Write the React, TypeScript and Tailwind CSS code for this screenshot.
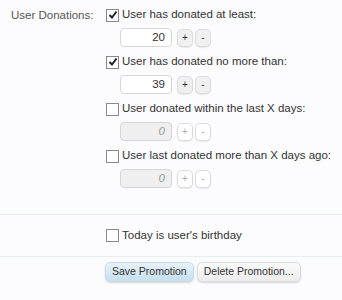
import React from 'react';

const Check: React.FC<{ checked?: boolean }> = ({ checked }) => (
    <span className="inline-flex w-[13px] h-[13px] border border-[#8a8a8a] bg-white items-center justify-center shrink-0">
        {checked && (
            <svg width="10" height="10" viewBox="0 0 10 10">
                <path d="M1.5 5 L4 7.5 L8.5 1.5" fill="none" stroke="#222" strokeWidth="2" />
            </svg>
        )}
    </span>
);

const Spinner: React.FC<{ value: string; disabled?: boolean }> = ({ value, disabled }) => (
    <div className="flex items-center gap-[2px] pl-[14px]">
        <div className={`w-[52px] h-[19px] rounded-[4px] border border-[#d6d6d6] text-right pr-[6px] leading-[17px] ${disabled ? 'bg-[#efefef] text-[#999] italic' : 'bg-white text-[#333]'}`}>
            {value}
        </div>
        <div className={`w-[16px] h-[18px] rounded-[5px] border border-[#dcdcdc] flex items-center justify-center text-[10px] shadow-[0_1px_1px_rgba(0,0,0,0.08)] ml-[3px] ${disabled ? 'bg-white text-[#aaa]' : 'bg-[#f0f0f0] text-[#333]'}`}>+</div>
        <div className={`w-[16px] h-[18px] rounded-[5px] border border-[#dcdcdc] flex items-center justify-center text-[10px] shadow-[0_1px_1px_rgba(0,0,0,0.08)] ${disabled ? 'bg-white text-[#aaa]' : 'bg-[#f0f0f0] text-[#333]'}`}>-</div>
    </div>
);

const Option: React.FC<{ label: string; checked?: boolean; value: string }> = ({ label, checked, value }) => (
    <div className="flex flex-col gap-[6px]">
        <label className="flex items-center gap-[3px] h-[14px] whitespace-nowrap">
            <Check checked={checked} />
            <span>{label}</span>
        </label>
        <Spinner value={value} disabled={!checked} />
    </div>
);

export default function App() {
    return (
        <div className="w-[342px] h-[300px] bg-[#fcfcfe] text-[#333] text-[11.5px] overflow-hidden" style={{ fontFamily: '"Liberation Sans", Arial, sans-serif' }}>
            <div className="flex pt-[8px]">
                <div className="w-[106px] pl-[11px] text-[#555] leading-[14px] whitespace-nowrap">User Donations:</div>
                <div className="flex flex-col gap-[8px]">
                    <Option label="User has donated at least:" checked value="20" />
                    <Option label="User has donated no more than:" checked value="39" />
                    <Option label="User donated within the last X days:" value="0" />
                    <Option label="User last donated more than X days ago:" value="0" />
                </div>
            </div>
            <div className="mt-[26px] border-t border-[#e4eef2]" />
            <div className="flex items-center pl-[106px] h-[41px]">
                <label className="flex items-center gap-[3px] whitespace-nowrap">
                    <Check />
                    <span>Today is user's birthday</span>
                </label>
            </div>
            <div className="border-t border-[#e4eef2]" />
            <div className="flex gap-[3px] pl-[105px] pt-[5px] text-[10.5px]">
                <button className="h-[20px] px-[6px] rounded-[5px] border border-[#c9dbe6] bg-gradient-to-b from-[#e8f2f8] to-[#c6dfee] text-[#333] shadow-[0_1px_2px_rgba(0,0,0,0.15)] whitespace-nowrap">Save Promotion</button>
                <button className="h-[20px] px-[6px] rounded-[5px] border border-[#dcdcdc] bg-gradient-to-b from-[#fafafa] to-[#ececec] text-[#333] shadow-[0_1px_2px_rgba(0,0,0,0.15)] whitespace-nowrap">Delete Promotion...</button>
            </div>
        </div>
    );
}
